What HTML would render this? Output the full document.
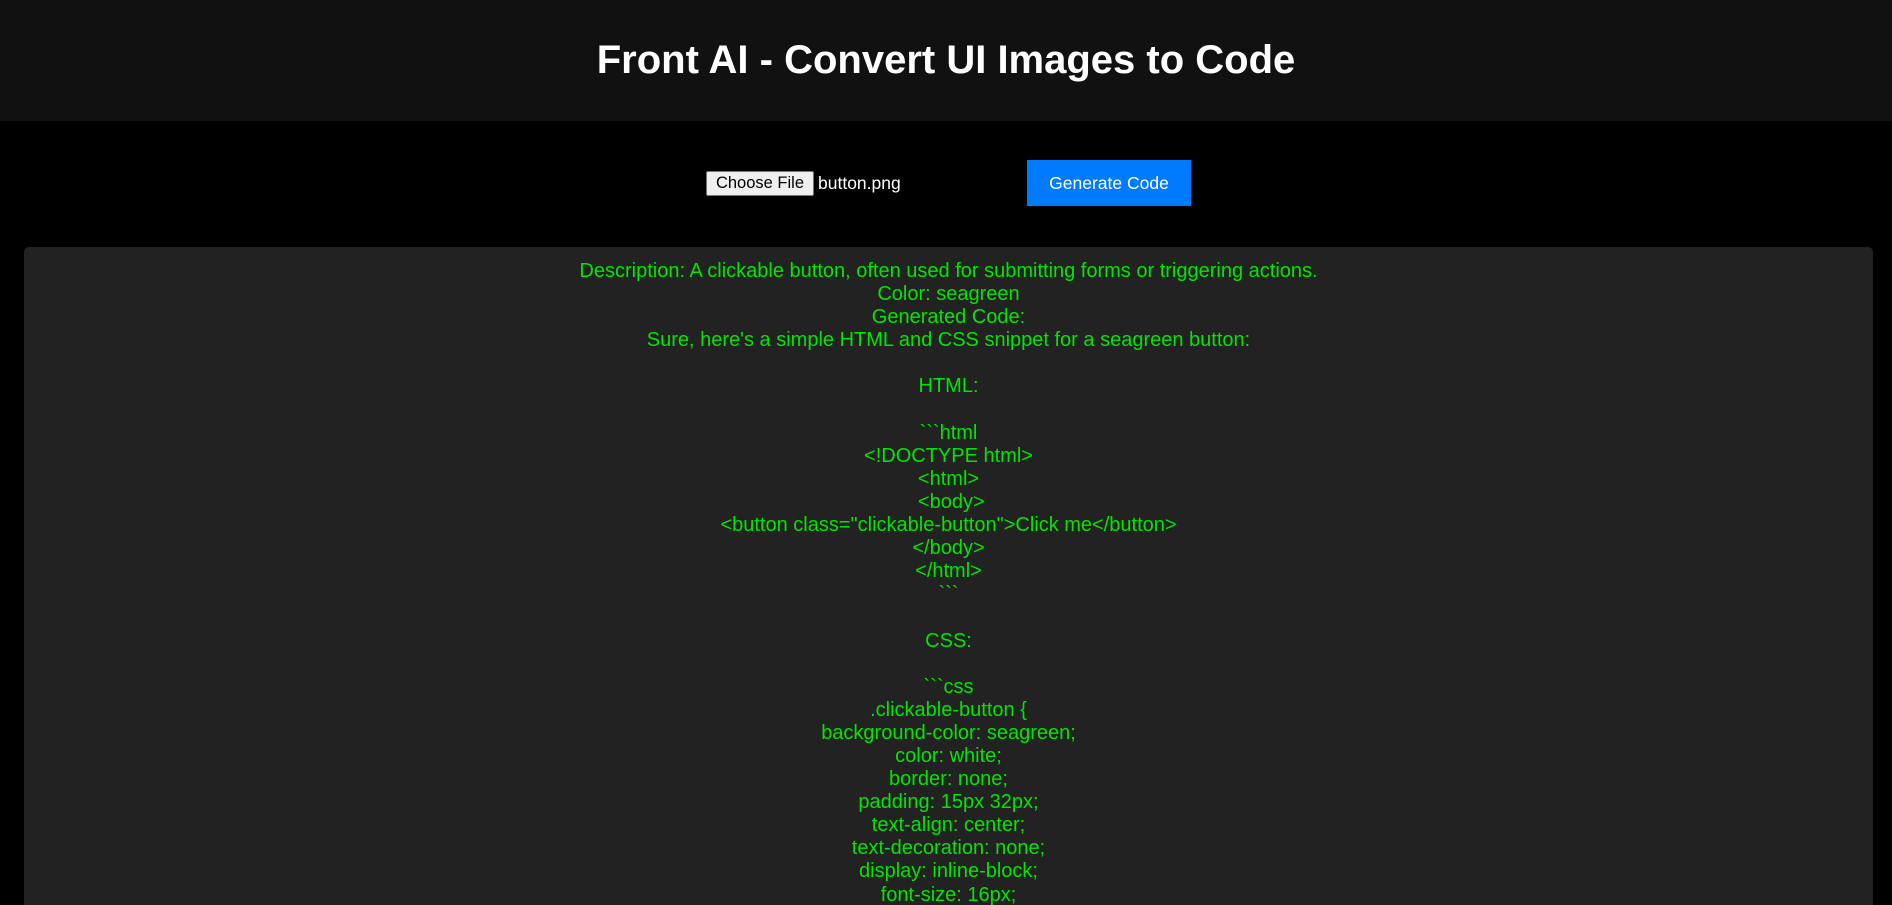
<!DOCTYPE html>
<html><head><style>
html,body{margin:0;padding:0;background:#000;width:1892px;height:905px;overflow:hidden;font-family:"Liberation Sans",Arial,sans-serif;}
header{background:#111;height:121px;display:flex;align-items:center;justify-content:center;}
h1{margin:0;color:#fff;font-size:40px;font-weight:bold;position:relative;top:0px;}
.cf{position:absolute;left:706px;top:171px;width:106px;height:23px;background:#efefef;border:1px solid #767676;border-radius:2px;font-size:16.5px;color:#000;text-align:center;line-height:23px;}
.fn{position:absolute;left:818px;top:170px;line-height:27px;font-size:17.5px;color:#fff;}
.gen{position:absolute;left:1027px;top:160px;width:164px;height:46px;background:#007bff;color:#fff;font-size:17.5px;text-align:center;line-height:46px;}
.panel{position:absolute;left:24px;top:247px;width:1849px;height:658px;overflow:hidden;background:#222;border-radius:5px 5px 0 0;padding-top:13px;box-sizing:border-box;text-align:center;color:#00e600;font-size:20px;line-height:23.1px;white-space:pre;}
</style></head><body>
<header><h1>Front AI - Convert UI Images to Code</h1></header>
<div class="cf">Choose File</div><div class="fn">button.png</div>
<div class="gen">Generate Code</div>
<div class="panel">Description: A clickable button, often used for submitting forms or triggering actions.
Color: seagreen
Generated Code:
Sure, here's a simple HTML and CSS snippet for a seagreen button:

HTML:

&#96;&#96;&#96;html
&lt;!DOCTYPE html&gt;
&lt;html&gt;
 &lt;body&gt;
&lt;button class="clickable-button"&gt;Click me&lt;/button&gt;
&lt;/body&gt;
&lt;/html&gt;
&#96;&#96;&#96;

CSS:

&#96;&#96;&#96;css
.clickable-button {
background-color: seagreen;
color: white;
border: none;
padding: 15px 32px;
text-align: center;
text-decoration: none;
display: inline-block;
font-size: 16px;</div>
</body></html>
